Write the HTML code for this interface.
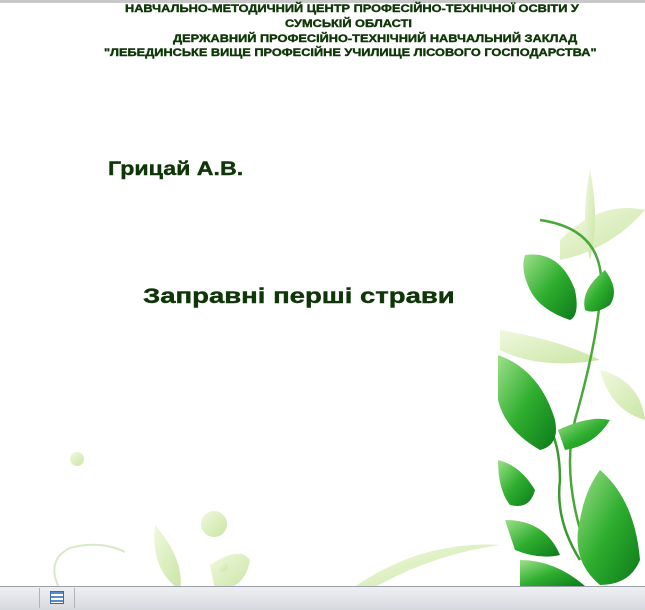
<!DOCTYPE html>
<html><head><meta charset="utf-8"><style>
body{margin:0;width:645px;height:609px;overflow:hidden;background:#fff;position:relative;font-family:"Liberation Sans",Arial,sans-serif;}
.t{position:absolute;color:#0f3608;font-weight:bold;white-space:nowrap;transform-origin:0 0;-webkit-text-stroke:0.4px #0f3608;}
.h{font-size:11px;line-height:14px;transform:scaleX(1.16);}
</style></head><body>
<div style="position:absolute;left:0;top:0;width:645px;height:3px;background:#c8c8c8"></div>
<svg style="position:absolute;left:0;top:0" width="645" height="609">
<defs>
<linearGradient id="g1" x1="0" y1="0" x2="1" y2="1"><stop offset="0" stop-color="#9fe08a"/><stop offset="0.5" stop-color="#2fae2f"/><stop offset="1" stop-color="#0c7a1a"/></linearGradient>
<linearGradient id="g2" x1="0" y1="0" x2="1" y2="1"><stop offset="0" stop-color="#e6f5c8"/><stop offset="1" stop-color="#a8d46a"/></linearGradient>
</defs>
<g opacity="0.6" fill="url(#g2)">
<path d="M560 240 Q600 200 645 210 Q610 250 560 260Z"/>
<path d="M590 170 Q600 220 590 260 Q580 220 590 170Z"/>
<path d="M500 330 Q560 340 600 360 Q540 370 500 350Z"/>
<path d="M600 370 Q640 380 645 420 Q610 410 600 370Z"/>
<path d="M155 525 Q185 560 180 590 Q150 570 155 525Z"/>
<path d="M210 565 Q240 545 250 560 Q245 590 215 590Z"/>
<circle cx="77" cy="459" r="7"/><circle cx="214" cy="524" r="13"/><circle cx="223" cy="567" r="5"/>
<path d="M350 590 Q420 540 500 545 Q430 555 370 590Z"/>
</g>
<path d="M60 590 Q45 560 70 548 Q100 540 125 552" stroke="#d8e8c8" stroke-width="2" fill="none"/>
<path d="M540 220 Q610 230 600 300 Q595 350 575 420 Q560 480 590 560" stroke="#4aa83a" stroke-width="2.5" fill="none"/>
<path d="M545 420 Q560 440 560 480 Q555 520 580 560" stroke="#3a9a30" stroke-width="2.5" fill="none"/>
<g fill="url(#g1)">
<path d="M525 255 Q560 250 575 290 Q580 315 570 320 Q540 310 530 290 Q520 270 525 255Z"/>
<path d="M605 270 Q620 290 610 305 Q595 315 585 310 Q580 290 605 270Z"/>
<path d="M498 355 Q540 370 555 420 Q560 445 540 450 Q505 430 498 400Z"/>
<path d="M558 430 Q590 415 610 420 Q595 445 565 450Z"/>
<path d="M600 470 Q635 500 640 560 Q630 585 600 585 Q570 560 580 520 Q585 490 600 470Z"/>
<path d="M498 460 Q520 465 535 490 Q530 510 510 505 Q498 490 498 460Z"/>
<path d="M505 520 Q545 520 560 555 Q540 560 515 550Z"/>
<path d="M520 560 Q555 560 585 586 L520 586Z"/>
</g>
</svg>
<div class="t h" style="left:125px;top:2px">НАВЧАЛЬНО-МЕТОДИЧНИЙ ЦЕНТР ПРОФЕСІЙНО-ТЕХНІЧНОЇ ОСВІТИ У</div>
<div class="t h" style="left:285px;top:17px">СУМСЬКІЙ ОБЛАСТІ</div>
<div class="t h" style="left:173px;top:32px">ДЕРЖАВНИЙ ПРОФЕСІЙНО-ТЕХНІЧНИЙ НАВЧАЛЬНИЙ ЗАКЛАД</div>
<div class="t h" style="left:104px;top:46px">"ЛЕБЕДИНСЬКЕ ВИЩЕ ПРОФЕСІЙНЕ УЧИЛИЩЕ ЛІСОВОГО ГОСПОДАРСТВА"</div>
<div class="t" style="left:108px;top:159px;font-size:19px;transform:scaleX(1.22)">Грицай А.В.</div>
<div class="t" style="left:143px;top:285px;font-size:21px;transform:scaleX(1.31)">Заправні перші страви</div>
<div style="position:absolute;left:0;top:586px;width:645px;height:23px;background:linear-gradient(#eef0f3,#d6d9de);border-top:1px solid #9aa0a8"></div>
<div style="position:absolute;left:39px;top:588px;width:1px;height:20px;background:#b0b4ba"></div>
<div style="position:absolute;left:74px;top:588px;width:1px;height:20px;background:#b0b4ba"></div>
<div style="position:absolute;left:50px;top:591px;width:12px;height:11px;background:repeating-linear-gradient(#5a8ac8 0 2px,#fff 2px 4px);border:1px solid #3a6aa8"></div>
</body></html>
